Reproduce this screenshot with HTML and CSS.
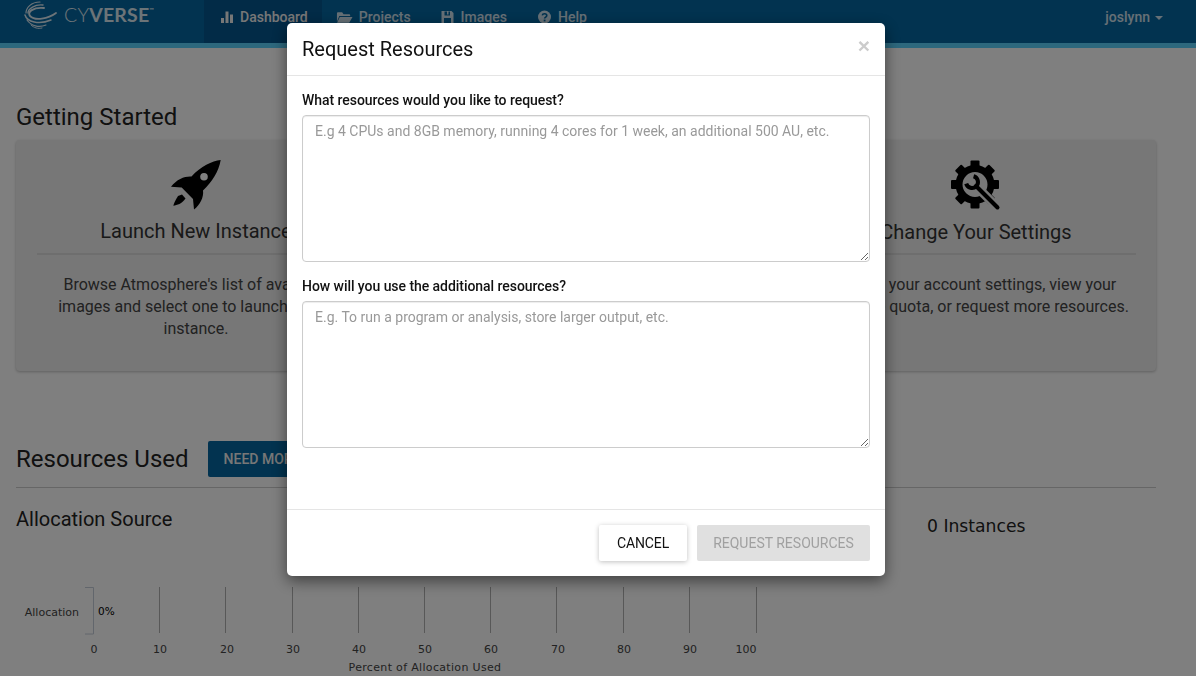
FILE: index.html
```html
<!DOCTYPE html>
<html lang="en">
<head>
<meta charset="utf-8">
<title>Request Resources</title>
<link rel="stylesheet" href="styles.css">
</head>
<body>
<header class="nav">
  <div class="brand">
    <svg class="brand-mark" width="34" height="30" viewBox="0 0 34 30" fill="none" stroke="#fff" stroke-linecap="round">
      <path d="M17 2C8 2 3 8 3 13" stroke-width="1.200"/>
      <path d="M20 5C12 4 5 9 5 13" stroke-width="1.400"/>
      <path d="M21 8C10 7 4 12 7 16C12 21 25 19 33 13" stroke-width="1.900"/>
      <path d="M2 15C4 22 16 25 28 20" stroke-width="1.500"/>
      <path d="M4 20C8 26 16 28 23 25" stroke-width="1.200"/>
      <path d="M8 25C11 28 15 29 19 28" stroke-width="1"/>
    </svg>
    <span class="brand-name"><span class="brand-cy">CY</span>VERSE<sup class="tm">™</sup></span>
  </div>
  <nav class="nav-links">
    <a class="nav-link active">
      <svg class="nav-icon" width="14" height="14" viewBox="0 0 14 14" fill="currentColor"><rect x="1" y="8" width="3" height="5"/><rect x="5.500" y="1.500" width="3" height="11.500"/><rect x="10" y="4.500" width="3" height="8.500"/></svg>
      Dashboard
    </a>
    <a class="nav-link">
      <svg class="nav-icon" width="17" height="14" viewBox="0 0 18 14" fill="currentColor"><path d="M1 3.500V12L3.500 6H15V5C15 4.400 14.600 4 14 4H8L6.500 2H2C1.400 2 1 2.600 1 3.500ZM4 7L1.200 13H14L17.500 7Z"/></svg>
      Projects
    </a>
    <a class="nav-link">
      <svg class="nav-icon" width="15" height="14" viewBox="0 0 14 14" fill="currentColor"><path d="M1 1H11L13 3V13H1ZM4 1.500V5.500H9.500V1.500H8V4.500H6.500V1.500ZM3.500 8V13H10.500V8Z" fill-rule="evenodd"/></svg>
      Images
    </a>
    <a class="nav-link">
      <svg class="nav-icon" width="15" height="14" viewBox="0 0 14 14"><circle cx="7" cy="7" r="6.500" fill="currentColor"/><path d="M4.800 5.400C5 3.200 9.300 3.200 9.300 5.600C9.300 7.100 7.100 7 7.100 8.500" fill="none" stroke="#0466a0" stroke-width="1.600"/><rect x="6.200" y="9.600" width="1.800" height="1.800" fill="#0466a0"/></svg>
      Help
    </a>
  </nav>
  <div class="user">joslynn <span class="caret"></span></div>
</header>

<main class="page">
  <h2 class="section-title first">Getting Started</h2>
  <section class="start-card">
    <article class="tile">
      <svg class="tile-icon" width="50" height="50" viewBox="0 0 50 50"><path d="M49.700 0C41 1 30 6 20.500 16.500C14 16 6 19 0 26.700L10.700 27.500L22 39L23 49.500C29 45 33 37 32 30.500C41 22 47.500 12 49.700 0Z"/><path d="M7 36C5 39 3 43 2.300 45.700C6 45 11 44 14.500 38.500L11 34.500Z"/><circle cx="33" cy="16.700" r="3.800" fill="#fff"/></svg>
      <h3 class="tile-title">Launch New Instance</h3>
      <p class="tile-text">Browse Atmosphere's list of available images and select one to launch a new instance.</p>
    </article>
    <article class="tile">
      <svg class="tile-icon" width="50" height="50" viewBox="0 0 50 50"><circle cx="25" cy="25" r="15"/></svg>
      <h3 class="tile-title">Browse Help Resources</h3>
      <p class="tile-text">View a video tutorial, read the how-to guides, or email the Atmosphere support team.</p>
    </article>
    <article class="tile">
      <svg class="tile-icon" width="50" height="51" viewBox="0 0 50 51">
        <circle cx="24" cy="24.500" r="16" fill="none" stroke="#000" stroke-width="7"/>
        <rect x="19.500" y="0.500" width="9" height="7" rx="1"/>
        <rect x="19.500" y="0.500" width="9" height="7" rx="1" transform="rotate(45 24 24.500)"/>
        <rect x="19.500" y="0.500" width="9" height="7" rx="1" transform="rotate(90 24 24.500)"/>
        <rect x="19.500" y="0.500" width="9" height="7" rx="1" transform="rotate(135 24 24.500)"/>
        <rect x="19.500" y="0.500" width="9" height="7" rx="1" transform="rotate(180 24 24.500)"/>
        <rect x="19.500" y="0.500" width="9" height="7" rx="1" transform="rotate(225 24 24.500)"/>
        <rect x="19.500" y="0.500" width="9" height="7" rx="1" transform="rotate(270 24 24.500)"/>
        <rect x="19.500" y="0.500" width="9" height="7" rx="1" transform="rotate(315 24 24.500)"/>
        <path d="M31 32L42 43" stroke="#eee" stroke-width="9" fill="none"/>
        <path d="M25 26L46.500 47.500" stroke="#000" stroke-width="4" stroke-linecap="round" fill="none"/>
        <path d="M15.200 23.600A6 6 0 1 0 22.600 16.200" stroke="#000" stroke-width="4" fill="none"/>
      </svg>
      <h3 class="tile-title low">Change Your Settings</h3>
      <p class="tile-text">Modify your account settings, view your resource quota, or request more resources.</p>
    </article>
  </section>

  <div class="resources-head">
    <h2 class="section-title">Resources Used</h2>
    <button class="need-more" type="button">NEED MORE?</button>
  </div>

  <div class="resources-body">
    <div class="alloc">
      <h3 class="alloc-title">Allocation Source</h3>
      <svg class="chart" width="800" height="128" viewBox="0 0 800 128">
        <g stroke="#b0b0b0" fill="none">
          <path d="M85 29.500H93.500V76H85" stroke="#c4ccd8"/>
          <path d="M159.500 29V75M225.500 29V75M292.500 29V75M358.500 29V75M424.500 29V75M490.500 29V75M556.500 29V75M623.500 29V75M689.500 29V75M756.500 29V75"/>
        </g>
        <g class="axis" text-anchor="middle">
          <text x="94" y="95">0</text><text x="160" y="95">10</text><text x="227" y="95">20</text><text x="293" y="95">30</text><text x="359" y="95">40</text><text x="425" y="95">50</text><text x="491" y="95">60</text><text x="558" y="95">70</text><text x="624" y="95">80</text><text x="690" y="95">90</text><text x="746" y="95">100</text>
          <text class="axis-title" x="425" y="113">Percent of Allocation Used</text>
        </g>
        <text class="axis" x="79" y="58" text-anchor="end">Allocation</text>
        <text class="pct" x="98" y="57">0%</text>
      </svg>
    </div>
    <div class="instances">0 Instances</div>
  </div>
</main>

<div class="backdrop"></div>

<div class="modal" role="dialog">
  <div class="modal-head">
    <h3 class="modal-title">Request Resources</h3>
    <span class="close">×</span>
  </div>
  <div class="modal-body">
    <label class="field-label">What resources would you like to request?</label>
    <textarea class="field" placeholder="E.g 4 CPUs and 8GB memory, running 4 cores for 1 week, an additional 500 AU, etc."></textarea>
    <label class="field-label second">How will you use the additional resources?</label>
    <textarea class="field" placeholder="E.g. To run a program or analysis, store larger output, etc."></textarea>
  </div>
  <div class="modal-foot">
    <button class="btn cancel" type="button">CANCEL</button>
    <button class="btn request" type="button">REQUEST RESOURCES</button>
  </div>
</div>
</body>
</html>
```
FILE: styles.css
```css
* { box-sizing: border-box; }
html, body { margin: 0; height: 100%; overflow: hidden; }
body { background: #fff; color: #000; font-family: Roboto, "Liberation Sans", sans-serif; font-size: 16px; }

.nav { height: 48px; background: #0466a0; border-bottom: 5px solid #5ad0fa; display: flex; color: #fff; }
.brand { width: 204px; flex: none; display: flex; align-items: flex-start; padding-left: 23px; }
.brand-mark { display: block; opacity: .85; }
.brand-name { font-family: Lato, sans-serif; font-size: 19.500px; line-height: 29px; margin-left: 7px; font-weight: 700; letter-spacing: .2px; white-space: nowrap; opacity: .85; }
.brand-cy { font-weight: 300; }
.tm { font-size: 6px; vertical-align: 10px; line-height: 0; }
.nav-links { display: flex; }
.nav-link { display: flex; align-items: flex-start; gap: 6px; padding: 8px 15px 0 14px; height: 43px; line-height: 18px; font-size: 14px; font-weight: 500; opacity: .8; }
.nav-icon { margin-top: 2px; }
.nav-link.active { padding-left: 16px; padding-right: 14px; background: #04568e; opacity: 1; color: #eee; }
.nav-link:nth-child(4) { padding-left: 15px; }
.user { margin-left: auto; padding: 8px 33px 0 0; height: 43px; display: flex; align-items: flex-start; gap: 5px; line-height: 18px; font-size: 14px; font-weight: 500; opacity: .8; }
.caret { width: 0; height: 0; border: 4px solid transparent; border-top-color: currentColor; border-bottom: 0; margin-top: 8px; }

.page { padding: 0 40px 0 16px; }
.section-title { margin: 0; font-size: 24px; font-weight: 400; line-height: 28px; color: #222; }
.section-title.first { margin-top: 55px; }
.start-card { margin-top: 9px; height: 231px; background: #eee; border-radius: 4px; box-shadow: 0 1px 3px rgba(0,0,0,.25); padding: 20px 20px 0 21px; display: grid; grid-template-columns: 318px 1fr 320px; column-gap: 71px; }
.tile { text-align: center; color: #333; }
.tile-icon { display: block; margin: 0 auto; }
.tile-title { margin: 9px 0 0; padding-bottom: 9px; border-bottom: 2px solid #ddd; font-size: 20px; font-weight: 400; line-height: 25px; color: #333; }
.tile-title.low { padding-bottom: 8px; }
.tile-text { margin: 19px 0 0; font-size: 16px; line-height: 22px; color: #444; }

.resources-head { display: flex; align-items: center; gap: 19px; margin-top: 70px; padding-bottom: 10px; border-bottom: 1px solid #ccc; }
.need-more { height: 36px; padding: 0 16px; border: 0; border-radius: 2px; background: #0466a0; color: #eee; font: 500 14px Roboto, sans-serif; }
.resources-body { display: flex; }
.alloc { width: 911px; flex: none; }
.alloc-title { margin: 19px 0 0; font-size: 20px; font-weight: 400; line-height: 24px; color: #222; }
.chart { display: block; margin: 27px 0 0 -16px; }
.axis { font-family: "DejaVu Sans", sans-serif; font-size: 11px; fill: #444; }
.axis-title { letter-spacing: .33px; }
.pct { font-family: "DejaVu Sans", sans-serif; font-size: 10.500px; fill: #000; }
.instances { margin-top: 26px; font-family: "DejaVu Sans", sans-serif; font-size: 17.200px; line-height: 24px; color: #222; }

.backdrop { position: fixed; inset: 0; background: rgba(0,0,0,.5); }
.modal { position: fixed; left: 287px; top: 23px; width: 598px; height: 553px; background: #fff; border-radius: 5px; box-shadow: 0 5px 15px rgba(0,0,0,.5); display: flex; flex-direction: column; }
.modal-head { height: 53px; padding: 0 15px; border-bottom: 1px solid #e5e5e5; display: flex; align-items: center; justify-content: space-between; }
.modal-title { margin: 0; font-size: 20px; font-weight: 400; color: #111; }
.close { font-family: "Liberation Sans", sans-serif; font-size: 21px; font-weight: 700; color: #ccc; margin-top: -6px; }
.modal-body { flex: 1; padding: 14px 15px 0; }
.field-label { display: block; font-size: 14px; font-weight: 500; letter-spacing: -.05px; line-height: 20px; color: #111; margin-bottom: 5px; }
.field-label.second { margin-top: 14px; }
.field { display: block; width: 100%; height: 147px; padding: 5px 12px; border: 1px solid #ccc; border-radius: 4px; font: 14px/20px Roboto, sans-serif; color: #555; outline: 0; box-shadow: inset 0 1px 1px rgba(0,0,0,.075); }
.field::placeholder { color: #999; opacity: 1; }
.modal-foot { height: 67px; border-top: 1px solid #e5e5e5; padding: 15px 15px 0 0; display: flex; justify-content: flex-end; gap: 10px; }
.btn { height: 36px; border: 0; border-radius: 2px; font: 400 14px Roboto, sans-serif; padding: 0; }
.cancel { width: 88px; background: #fff; color: #111; letter-spacing: -.1px; box-shadow: 0 1px 5px rgba(0,0,0,.25); }
.request { width: 173px; background: #e0e0e0; color: #a0a0a0; }
```
